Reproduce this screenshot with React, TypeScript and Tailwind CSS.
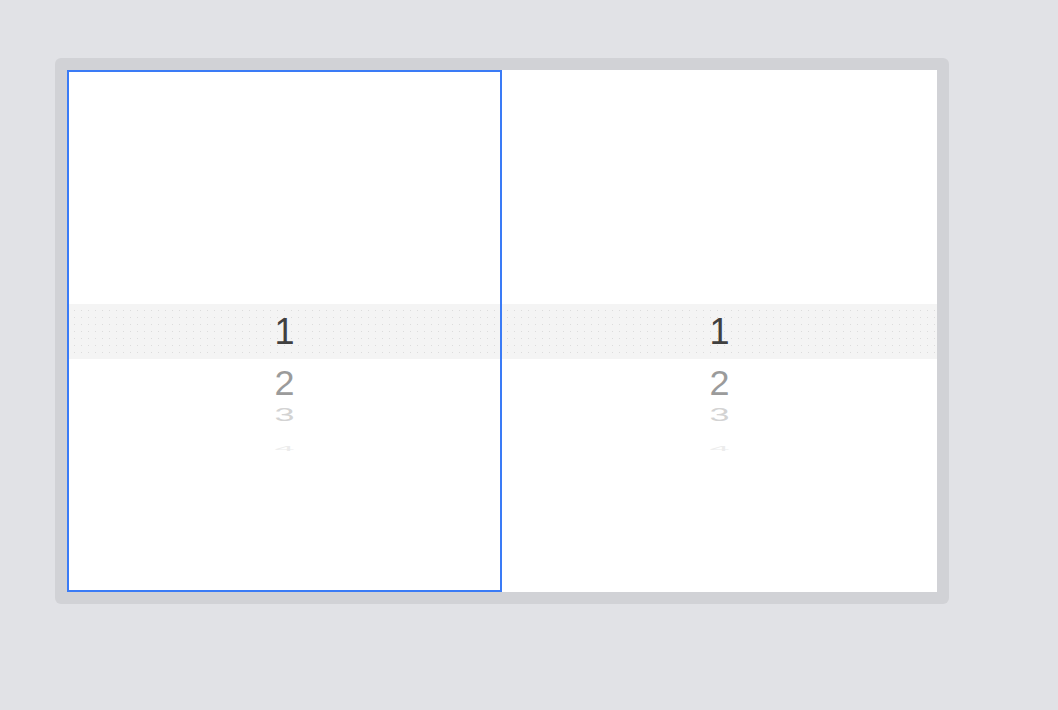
import React from 'react';

const font = { fontFamily: '"Liberation Sans", Arial, sans-serif' };

function Wheel({ selected }: { selected?: boolean }) {
  return (
    <div
      className={
        'flex flex-col h-full ' +
        (selected ? 'border-2 border-[#3a7bf6]' : 'py-[2px]')
      }
    >
      {/* space above the first row */}
      <div className="flex-1" />

      {/* selection band */}
      <div className="h-[55px] bg-[#f4f4f4] bg-[radial-gradient(#dcdcdc_0.7px,transparent_1px)] bg-[length:7px_7px] bg-[position:2px_3px] flex justify-center">
        <span className="text-[36px] leading-[55px] text-[#404040]">1</span>
      </div>

      {/* rows below, rolling away on the wheel */}
      <div className="flex-1 flex flex-col items-center">
        <div className="mt-[4px] h-[40px] flex items-center justify-center">
          <span className="inline-block text-[36px] leading-[36px] text-[#9b9b9b] scale-y-[0.96]">2</span>
        </div>
        <div className="h-[24px] flex items-center justify-center">
          <span className="inline-block text-[36px] leading-[36px] text-[#d3d3d3] scale-y-50">3</span>
        </div>
        <div className="mt-[11px] h-[20px] flex items-center justify-center">
          <span className="inline-block text-[36px] leading-[36px] text-[#ececec] scale-y-[0.22]">4</span>
        </div>
      </div>
    </div>
  );
}

export default function App() {
  return (
    <div className="min-h-screen bg-[#e1e2e6] pl-[55px] pt-[58px]" style={font}>
      <div className="w-[894px] rounded-md bg-[#d1d2d6] p-[12px]">
        <div className="grid grid-cols-2 h-[522px] bg-white">
          <Wheel selected />
          <Wheel />
        </div>
      </div>
    </div>
  );
}
